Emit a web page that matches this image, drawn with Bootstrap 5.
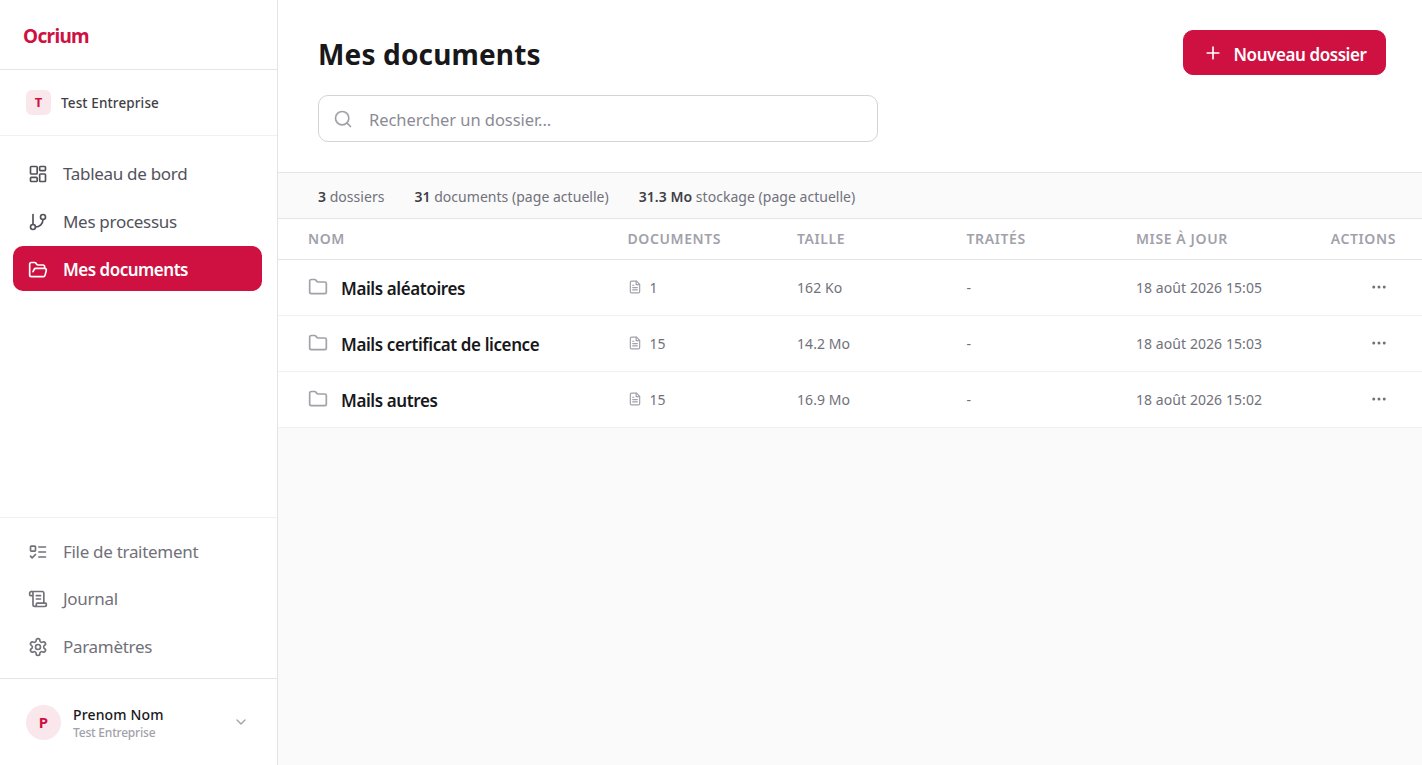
<!DOCTYPE html>
<html lang="fr">
<head>
  <meta charset="UTF-8"/>
  <meta name="viewport" content="width=device-width, initial-scale=1.0"/>
  <title>Mes documents - Ocrium</title>
  <link href="https://cdn.jsdelivr.net/npm/bootstrap@5.3.0/dist/css/bootstrap.min.css" rel="stylesheet">
  <style>
    html, body {
      height: 100%;
      margin: 0;
      overflow: hidden;
    }
    body {
      font-family: "Noto Sans", "Open Sans", sans-serif;
      color: #18181b;
      background: #fafafa;
    }
    svg { flex: none; display: block; }
    .app-shell { height: 765px; }
    .side-panel {
      width: 278px;
      flex: none;
      background: #fff;
      border-right: 1px solid #e4e4e7;
    }
    .brand-row {
      height: 70px;
      padding: 4px 23px 0;
      border-bottom: 1px solid #e4e4e7;
      color: #ce1141;
      font-size: 19px;
      font-weight: 700;
      letter-spacing: -0.65px;
    }
    .org-row {
      height: 66px;
      padding: 0 26px;
      border-bottom: 1px solid #f1f1f3;
      font-size: 13.5px;
      font-weight: 500;
      color: #3f3f46;
      gap: 10px;
      letter-spacing: 0.13px;
    }
    .org-name { padding-top: 2px; }
    .org-mark {
      width: 25px;
      height: 25px;
      border-radius: 6px;
      background: #f9e7ec;
      color: #ce1141;
      font-size: 13px;
      font-weight: 700;
    }
    .nav-stack { padding: 0 15px 0 13px; gap: 2.5px; }
    .nav-top { padding-top: 15px; padding-bottom: 15px; }
    .nav-top .nav-entry { padding-top: 1px; }
    .nav-bottom { padding-top: 11px; padding-bottom: 9px; border-top: 1px solid #f1f1f3; border-bottom: 1px solid #e4e4e7; }
    .nav-entry {
      height: 45px;
      padding: 0 15px;
      gap: 15px;
      border-radius: 10px;
      font-size: 17px;
      color: #52525b;
      text-decoration: none;
      letter-spacing: -0.3px;
    }
    .nav-muted { color: #71717a; }
    .nav-current {
      background: #ce1141;
      color: #fff;
      font-weight: 600;
      letter-spacing: -0.5px;
    }
    .nav-top .nav-current { padding-top: 2px; }
    .user-row { padding: 0 28px 0 26px; height: 86px; gap: 12px; }
    .user-avatar {
      width: 35px;
      height: 35px;
      border-radius: 50%;
      background: #f9e7ec;
      color: #ce1141;
      font-size: 15px;
      font-weight: 700;
    }
    .user-text { padding-top: 2px; }
    .user-name { font-size: 14px; font-weight: 500; line-height: 19px; letter-spacing: 0.15px; }
    .user-org { font-size: 12px; font-weight: 500; color: #a1a1aa; line-height: 17px; letter-spacing: -0.2px; }
    .page-head {
      height: 173px;
      padding: 30px 36px 0 40px;
      background: #fff;
      border-bottom: 1px solid #e4e4e7;
    }
    .page-title {
      font-size: 28px;
      font-weight: 700;
      line-height: 49px;
      margin: 0;
      letter-spacing: 0.15px;
    }
    .add-btn {
      width: 203px;
      height: 45px;
      background: #ce1141;
      border-color: #ce1141;
      color: #fff;
      border-radius: 10px;
      font-size: 17px;
      font-weight: 600;
      gap: 11px;
      padding: 0;
      letter-spacing: -0.42px;
    }
    .add-btn:hover { background: #b50e39; border-color: #b50e39; color: #fff; }
    .add-label { padding-top: 4px; }
    .search-box {
      width: 560px;
      height: 47px;
      margin-top: 16px;
      position: relative;
    }
    .search-box svg {
      position: absolute;
      left: 15px;
      top: 14px;
    }
    .search-input {
      height: 47px;
      padding: 1px 12px 0 50px;
      border: 1px solid #d4d4d8;
      border-radius: 10px;
      font-size: 16.5px;
      letter-spacing: -0.06px;
    }
    .search-input::placeholder { color: #8b8b94; opacity: 1; }
    .stats-bar {
      height: 46px;
      padding: 2px 40px 0;
      gap: 30px;
      border-bottom: 1px solid #e4e4e7;
      background: #fafafa;
      font-size: 14px;
      color: #71717a;
      letter-spacing: 0.03px;
    }
    .stats-bar b { font-weight: 600; color: #3f3f46; }
    .doc-table {
      table-layout: fixed;
      width: 100%;
      margin: 0;
      background: #fff;
    }
    .doc-table th, .doc-table td {
      border-bottom: 1px solid #f1f1f3;
      padding: 0;
      vertical-align: middle;
      background: #fff;
    }
    .doc-table th {
      height: 40px;
      border-bottom-color: #e4e4e7;
      font-size: 14px;
      font-weight: 600;
      color: #a1a1aa;
      text-transform: uppercase;
      letter-spacing: 0.6px;
    }
    .doc-table td {
      height: 56px;
      font-size: 14px;
      color: #71717a;
      letter-spacing: 0.07px;
    }
    .col-name { width: 349.5px; padding-left: 30px !important; }
    .col-docs { width: 169.5px; }
    .col-size { width: 169.5px; }
    .col-done { width: 169.5px; }
    .col-date { width: 194px; }
    .col-acts { padding-right: 26px !important; text-align: right; }
    .folder-name {
      font-size: 17px;
      font-weight: 600;
      color: #18181b;
      gap: 13px;
      letter-spacing: -0.4px;
    }
    .folder-label { padding-top: 4px; }
    .doc-count { gap: 8px; }
    .more-btn {
      padding: 0;
      border: 0;
      background: none;
      margin-left: auto;
      margin-right: 8px;
    }
  </style>
</head>
<body>
  <div class="app-shell d-flex">
    <aside class="side-panel d-flex flex-column">
      <div class="brand-row d-flex align-items-center">Ocrium</div>
      <div class="org-row d-flex align-items-center">
        <span class="org-mark d-flex align-items-center justify-content-center">T</span>
        <span class="org-name">Test Entreprise</span>
      </div>
      <nav class="nav-stack nav-top d-flex flex-column flex-grow-1">
        <a class="nav-entry d-flex align-items-center" href="#">
          <svg width="20" height="20" viewBox="0 0 24 24" fill="none" stroke="currentColor" stroke-width="2" stroke-linecap="round" stroke-linejoin="round"><rect x="3" y="3" width="8" height="9" rx="1"/><rect x="14" y="3" width="7" height="5" rx="1"/><rect x="14" y="12" width="7" height="9" rx="1"/><rect x="3" y="16" width="8" height="5" rx="1"/></svg>
          Tableau de bord
        </a>
        <a class="nav-entry d-flex align-items-center" href="#">
          <svg width="20" height="20" viewBox="0 0 24 24" fill="none" stroke="currentColor" stroke-width="2" stroke-linecap="round" stroke-linejoin="round"><path d="M6 3v12"/><circle cx="18" cy="6" r="3"/><circle cx="6" cy="18" r="3"/><path d="M18 9a9 9 0 0 1-9 9"/></svg>
          Mes processus
        </a>
        <a class="nav-entry nav-current d-flex align-items-center" href="#">
          <svg width="20" height="20" viewBox="0 0 24 24" fill="none" stroke="currentColor" stroke-width="2" stroke-linecap="round" stroke-linejoin="round"><path d="m6 14 1.5-2.9A2 2 0 0 1 9.24 10H20a2 2 0 0 1 1.94 2.5l-1.54 6a2 2 0 0 1-1.95 1.5H4a2 2 0 0 1-2-2V5a2 2 0 0 1 2-2h3.9a2 2 0 0 1 1.69.9l.81 1.2a2 2 0 0 0 1.67.9H18a2 2 0 0 1 2 2v2"/></svg>
          Mes documents
        </a>
      </nav>
      <nav class="nav-stack nav-bottom d-flex flex-column">
        <a class="nav-entry nav-muted d-flex align-items-center" href="#">
          <svg width="20" height="20" viewBox="0 0 24 24" fill="none" stroke="currentColor" stroke-width="2" stroke-linecap="round" stroke-linejoin="round"><rect x="3" y="5" width="6" height="6" rx="1"/><path d="m3 17 2 2 4-4"/><path d="M13 6h8"/><path d="M13 12h8"/><path d="M13 18h8"/></svg>
          File de traitement
        </a>
        <a class="nav-entry nav-muted d-flex align-items-center" href="#">
          <svg width="20" height="20" viewBox="0 0 24 24" fill="none" stroke="currentColor" stroke-width="2" stroke-linecap="round" stroke-linejoin="round"><path d="M15 12h-5"/><path d="M15 8h-5"/><path d="M19 17V5a2 2 0 0 0-2-2H4"/><path d="M8 21h12a2 2 0 0 0 2-2v-1a1 1 0 0 0-1-1H11a1 1 0 0 0-1 1v1a2 2 0 1 1-4 0V5a2 2 0 1 0-4 0v2a1 1 0 0 0 1 1h3"/></svg>
          Journal
        </a>
        <a class="nav-entry nav-muted d-flex align-items-center" href="#">
          <svg width="20" height="20" viewBox="0 0 24 24" fill="none" stroke="currentColor" stroke-width="2" stroke-linecap="round" stroke-linejoin="round"><path d="M12.22 2h-.44a2 2 0 0 0-2 2v.18a2 2 0 0 1-1 1.73l-.43.25a2 2 0 0 1-2 0l-.15-.08a2 2 0 0 0-2.73.73l-.22.38a2 2 0 0 0 .73 2.73l.15.1a2 2 0 0 1 1 1.72v.51a2 2 0 0 1-1 1.74l-.15.09a2 2 0 0 0-.73 2.73l.22.38a2 2 0 0 0 2.73.73l.15-.08a2 2 0 0 1 2 0l.43.25a2 2 0 0 1 1 1.73V20a2 2 0 0 0 2 2h.44a2 2 0 0 0 2-2v-.18a2 2 0 0 1 1-1.73l.43-.25a2 2 0 0 1 2 0l.15.08a2 2 0 0 0 2.73-.73l.22-.39a2 2 0 0 0-.73-2.73l-.15-.08a2 2 0 0 1-1-1.74v-.5a2 2 0 0 1 1-1.74l.15-.09a2 2 0 0 0 .73-2.73l-.22-.38a2 2 0 0 0-2.73-.73l-.15.08a2 2 0 0 1-2 0l-.43-.25a2 2 0 0 1-1-1.73V4a2 2 0 0 0-2-2z"/><circle cx="12" cy="12" r="3"/></svg>
          Paramètres
        </a>
      </nav>
      <div class="user-row d-flex align-items-center">
        <span class="user-avatar d-flex align-items-center justify-content-center">P</span>
        <div class="user-text flex-grow-1">
          <div class="user-name">Prenom Nom</div>
          <div class="user-org">Test Entreprise</div>
        </div>
        <svg width="16" height="16" viewBox="0 0 24 24" fill="none" stroke="#a1a1aa" stroke-width="2" stroke-linecap="round" stroke-linejoin="round"><path d="m6 9 6 6 6-6"/></svg>
      </div>
    </aside>

    <main class="flex-grow-1 d-flex flex-column">
      <header class="page-head">
        <div class="d-flex justify-content-between align-items-start">
          <h1 class="page-title">Mes documents</h1>
          <button class="btn add-btn d-flex align-items-center justify-content-center" type="button">
            <svg width="20" height="20" viewBox="0 0 24 24" fill="none" stroke="currentColor" stroke-width="2" stroke-linecap="round"><path d="M5 12h14"/><path d="M12 5v14"/></svg>
            <span class="add-label">Nouveau dossier</span>
          </button>
        </div>
        <div class="search-box">
          <svg width="20" height="20" viewBox="0 0 24 24" fill="none" stroke="#a1a1aa" stroke-width="2" stroke-linecap="round" stroke-linejoin="round"><circle cx="11" cy="11" r="8"/><path d="m21 21-4.3-4.3"/></svg>
          <input class="form-control search-input" type="text" placeholder="Rechercher un dossier...">
        </div>
      </header>

      <div class="stats-bar d-flex align-items-center">
        <span><b>3</b> dossiers</span>
        <span><b>31</b> documents (page actuelle)</span>
        <span><b>31.3 Mo</b> stockage (page actuelle)</span>
      </div>

      <table class="table doc-table">
        <thead>
          <tr>
            <th class="col-name">Nom</th>
            <th class="col-docs">Documents</th>
            <th class="col-size">Taille</th>
            <th class="col-done">Traités</th>
            <th class="col-date">Mise à jour</th>
            <th class="col-acts">Actions</th>
          </tr>
        </thead>
        <tbody id="rows"></tbody>
      </table>
    </main>
  </div>

  <script>
    const folders = [
      { name: 'Mails aléatoires', docs: 1, size: '162 Ko', date: '18 août 2026 15:05' },
      { name: 'Mails certificat de licence', docs: 15, size: '14.2 Mo', date: '18 août 2026 15:03' },
      { name: 'Mails autres', docs: 15, size: '16.9 Mo', date: '18 août 2026 15:02' }
    ];
    const folderIcon = '<svg width="20" height="20" viewBox="0 0 24 24" fill="none" stroke="#a1a1aa" stroke-width="2" stroke-linecap="round" stroke-linejoin="round"><path d="M20 20a2 2 0 0 0 2-2V8a2 2 0 0 0-2-2h-7.9a2 2 0 0 1-1.69-.9L9.6 3.9A2 2 0 0 0 7.93 3H4a2 2 0 0 0-2 2v13a2 2 0 0 0 2 2Z"/></svg>';
    const fileIcon = '<svg width="14" height="14" viewBox="0 0 24 24" fill="none" stroke="#a1a1aa" stroke-width="2" stroke-linecap="round" stroke-linejoin="round"><path d="M14.5 2H6a2 2 0 0 0-2 2v16a2 2 0 0 0 2 2h12a2 2 0 0 0 2-2V7.5L14.5 2z"/><path d="M14 2v6h6"/><path d="M16 13H8"/><path d="M16 17H8"/><path d="M10 9H8"/></svg>';
    const moreIcon = '<svg width="18" height="18" viewBox="0 0 24 24" fill="#71717a"><circle cx="5" cy="12" r="2"/><circle cx="12" cy="12" r="2"/><circle cx="19" cy="12" r="2"/></svg>';

    document.getElementById('rows').innerHTML = folders.map(f => `
      <tr>
        <td class="col-name"><div class="folder-name d-flex align-items-center">${folderIcon}<span class="folder-label">${f.name}</span></div></td>
        <td><div class="doc-count d-flex align-items-center">${fileIcon}<span>${f.docs}</span></div></td>
        <td>${f.size}</td>
        <td>-</td>
        <td>${f.date}</td>
        <td class="col-acts"><button class="more-btn d-block" type="button" aria-label="Actions">${moreIcon}</button></td>
      </tr>`).join('');
  </script>
  <script src="https://cdn.jsdelivr.net/npm/bootstrap@5.3.0/dist/js/bootstrap.bundle.min.js"></script>
</body>
</html>
